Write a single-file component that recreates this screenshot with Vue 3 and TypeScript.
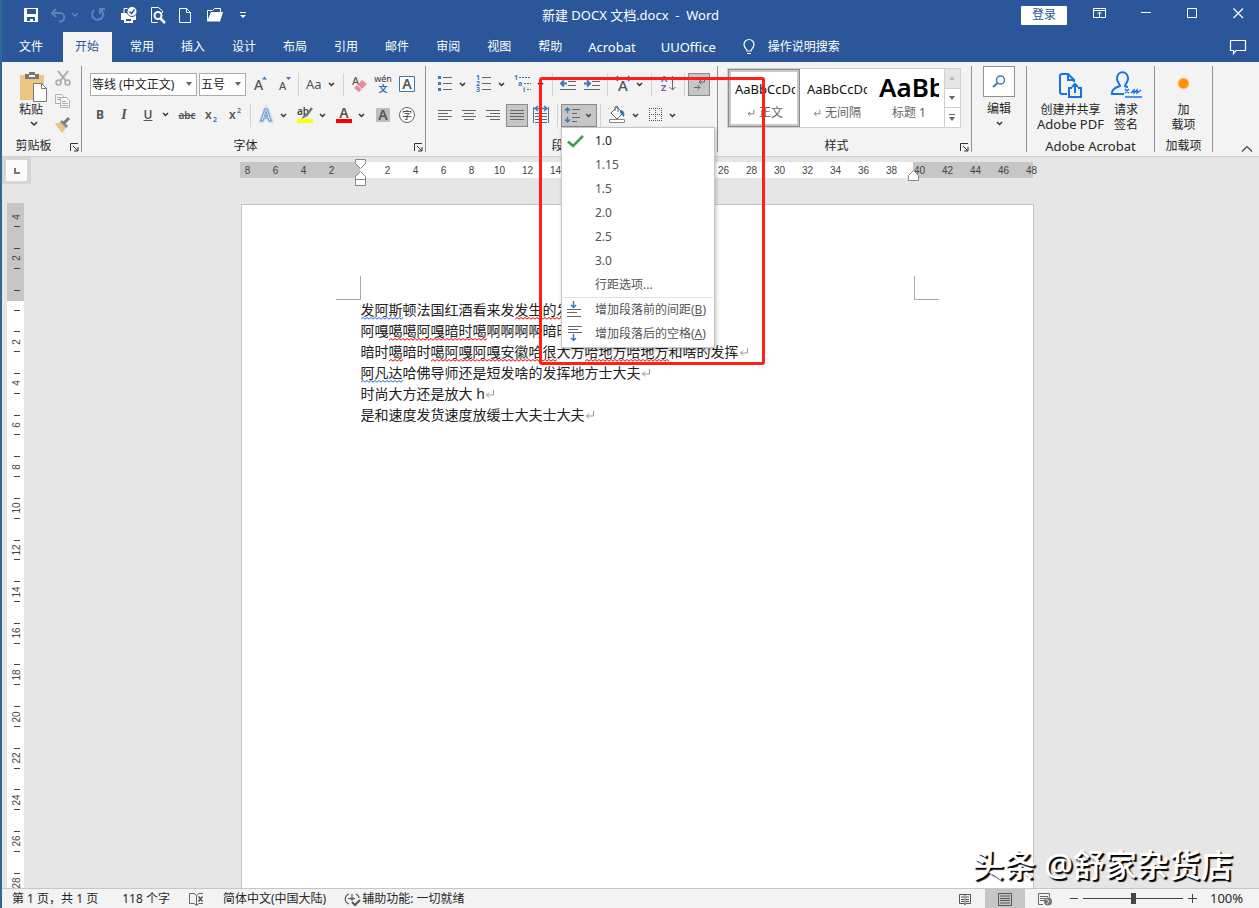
<script setup lang="ts">
import { ref } from 'vue'

interface Run {
  text: string
  mark?: 'grammar' | 'spelling'
}

const tabs: string[] = ['文件', '开始', '常用', '插入', '设计', '布局', '引用', '邮件', '审阅', '视图', '帮助', 'Acrobat', 'UUOffice']
const activeTab = ref('开始')

const spacings: string[] = ['1.0', '1.15', '1.5', '2.0', '2.5', '3.0']
const currentSpacing = ref('1.0')
const zoomLevel = ref(100)

const across: string[] = ['8', '6', '4', '2', '']
for (let n = 2; n <= 48; n += 2) across.push(String(n))
const down: string[] = ['4', '2', '']
for (let n = 2; n <= 28; n += 2) down.push(String(n))

const paragraphs: Run[][] = [
  [{ text: '发阿斯', mark: 'grammar' }, { text: '顿法国红酒看来发' }, { text: '发生的发', mark: 'spelling' }],
  [{ text: '阿嘎' }, { text: '噶噶阿嘎暗时噶', mark: 'spelling' }, { text: '啊啊啊啊暗时' }],
  [
    { text: '暗时' },
    { text: '噶', mark: 'spelling' },
    { text: '暗时' },
    { text: '噶阿嘎阿嘎安徽哈很', mark: 'spelling' },
    { text: '大方' },
    { text: '哈地方哈地方', mark: 'spelling' },
    { text: '和啥的发挥' },
  ],
  [{ text: '阿凡达', mark: 'grammar' }, { text: '哈佛导师还是短发啥的发挥地方士大夫' }],
  [{ text: '时尚大方还是放大 h' }],
  [{ text: '是和速度发货速度放缓士大夫士大夫' }],
]
</script>

<template>
  <div class="window">
    <svg class="defs" width="0" height="0" aria-hidden="true">
      <symbol id="chev" viewBox="0 0 12 23"><path d="M3 10l2.500 2.500L8 10" fill="none" stroke="#333" stroke-width="1.500" /></symbol>
      <symbol id="launch" viewBox="0 0 16 12"><path d="M5.500 11V3.500H13M8 6l4.500 4.500M13 7v4H9" fill="none" stroke="#333" /></symbol>
      <symbol id="ret" viewBox="0 0 10 10"><path d="M8.500 1v5h-7M4 3.500L1.500 6 4 8.500" fill="none" stroke="currentColor" /></symbol>
    </svg>

    <header class="titlebar">
      <div class="quick">
        <button aria-label="保存"><svg width="30" height="30"><path d="M9 8h14v14H9z" fill="#fff" /><path d="M12 9h9v5h-9zM12 17h8v4h-2v-2h-3v2h-3z" fill="#2b579a" /></svg></button>
        <button aria-label="撤消"><svg width="36" height="30"><path d="M11 9L7 13l4 4M7.500 13H15a4 4 0 0 1 0 8.500h-1" fill="none" stroke="#5f83ba" stroke-width="2" /><path d="M27 13l3 3 3-3" fill="none" stroke="#5f83ba" stroke-width="1.500" /></svg></button>
        <button aria-label="恢复"><svg width="32" height="30"><path d="M13 10a5.500 5.500 0 1 0 8 1l-2-1.500" fill="none" stroke="#5f83ba" stroke-width="2" /><path d="M24 9h-5v5" fill="none" stroke="#5f83ba" stroke-width="2" /></svg></button>
        <button aria-label="打印"><svg width="30" height="30"><path d="M8 13h15v7h-3v3H11v-3H8z" fill="#fff" /><path d="M11 13V8.500h6M12.500 18.500h6v3h-6z" fill="#2b579a" stroke="#fff" /><circle cx="19" cy="11.500" r="5" fill="#fff" stroke="#2b579a" /><path d="M16.500 11.500l2 2 3-4" fill="none" stroke="#2b579a" stroke-width="1.500" /></svg></button>
        <button aria-label="打印预览"><svg width="29" height="30"><path d="M19.500 13V11l-4-3.500H8.500v15h6" fill="none" stroke="#fff" /><circle cx="15" cy="15.500" r="3.500" fill="none" stroke="#fff" stroke-width="2" /><path d="M17 18l5 5" stroke="#fff" stroke-width="2.500" /></svg></button>
        <button aria-label="新建"><svg width="28" height="30"><path d="M7.500 8.500h7l4 4v10h-11zM14.500 8.500v4h4" fill="none" stroke="#fff" /></svg></button>
        <button aria-label="打开"><svg width="31" height="30"><path d="M7.500 21V10.500h5l2-2h6v4" fill="none" stroke="#fff" /><path d="M11 12h12l-3 9.500H7z" fill="#fff" /></svg></button>
        <button aria-label="自定义快速访问工具栏"><svg width="26" height="30"><path d="M9 12.500h6" stroke="#fff" /><path d="M9 15h6l-3 3z" fill="#fff" /></svg></button>
      </div>
      <h1>新建 DOCX 文档.docx&nbsp; -&nbsp; Word</h1>
      <div class="system">
        <button class="login">登录</button>
        <button aria-label="功能区显示选项"><svg width="46" height="30"><path d="M7.500 8.500h12v9h-12zM7.500 10.500h12M13.500 17v-5M11.500 14l2-2 2 2" fill="none" stroke="#fff" /></svg></button>
        <button aria-label="最小化"><svg width="46" height="30"><path d="M9 12.500h10" stroke="#fff" /></svg></button>
        <button aria-label="最大化"><svg width="46" height="30"><path d="M9.500 8.500h9v9h-9z" fill="none" stroke="#fff" /></svg></button>
        <button aria-label="关闭"><svg width="27" height="30"><path d="M9.500 8.500l9.500 9.500M19 8.500L9.500 18" stroke="#fff" stroke-width="1.200" /></svg></button>
      </div>
    </header>

    <nav class="tabs">
      <button v-for="tab in tabs" :key="tab" :class="{ active: tab === activeTab, file: tab === '文件', latin: /^[A-Z]/.test(tab) }" @click="activeTab = tab">{{ tab }}</button>
      <button class="tell">
        <svg width="14" height="18"><path d="M5 13c0-2-3-3-3-6.500a5 5 0 0 1 10 0C12 10 9 11 9 13zM5 15.500h4" fill="none" stroke="#fff" stroke-width="1.200" /></svg>
        操作说明搜索
      </button>
      <button class="comments" aria-label="批注"><svg width="18" height="18"><path d="M1.500 2.500h15v10H7l-2.500 3v-3h-3z" fill="none" stroke="#fff" stroke-width="1.200" /></svg></button>
    </nav>

    <section class="ribbon">
      <div class="group clipboard">
        <div class="body side">
          <button class="paste">
            <svg width="30" height="32"><path d="M1 5h24v25H1z" fill="#ecc580" /><path d="M6 4h4V2h6v2h4v5H6z" fill="#777" /><path d="M10 5h6v2h-6z" fill="#f3f3f3" /><path d="M14.500 13.500h8l5 5v13h-13z" fill="#fff" stroke="#777" /><path d="M22.500 13.500v5h5" fill="none" stroke="#777" /></svg>
            <span>粘贴</span>
            <svg width="12" height="11" viewBox="0 6 12 11"><path d="M3 10l3 3 3-3" fill="none" stroke="#333" stroke-width="1.500" /></svg>
          </button>
          <div class="stack">
            <button aria-label="剪切"><svg width="18" height="22"><path d="M4 1l8 10M14 1L6 11" stroke="#aaa" stroke-width="2" /><g fill="none" stroke="#aaa" stroke-width="1.500"><circle cx="4.500" cy="12.500" r="2.500" /><circle cx="13.500" cy="12.500" r="2.500" /></g></svg></button>
            <button aria-label="复制"><svg width="18" height="23"><g fill="#f6f3f6" stroke="#b5acb5"><path d="M1.500 2.500h6l2 2v7h-8z" /><path d="M6.500 5.500h6l3 3v7h-9z" /></g><path d="M8 9.500h4M8 11.500h6M8 13.500h6M3 5.500h3M3 7.500h3" stroke="#b5acb5" /></svg></button>
            <button aria-label="格式刷"><svg width="18" height="23"><path d="M1 9l5-2 6 6-4 5z" fill="#ecc580" /><path d="M6 7l2-2 6 6-2 2z" fill="#888" /><path d="M10 8l5-5" stroke="#777" stroke-width="3" /></svg></button>
          </div>
        </div>
        <div class="caption"><span>剪贴板</span><button aria-label="剪贴板选项"><svg width="16" height="12"><use href="#launch" /></svg></button></div>
      </div>

      <div class="group font">
        <div class="body">
          <div class="row">
            <label class="combo family"><select aria-label="字体"><option>等线 (中文正文)</option></select><svg width="7" height="5"><path d="M0 0h6L3 4z" fill="#666" /></svg></label>
            <label class="combo size"><select aria-label="字号"><option>五号</option></select><svg width="7" height="5"><path d="M0 0h6L3 4z" fill="#666" /></svg></label>
            <button aria-label="增大字号"><svg width="25" height="23"><text x="8" y="17" class="glyph medium" font-size="14">A</text><path d="M16 6.500l2.500-3 2.500 3z" fill="#3d78b4" /></svg></button>
            <button aria-label="减小字号"><svg width="24" height="23"><text x="8" y="17" class="glyph medium" font-size="11">A</text><path d="M15 4h5l-2.500 3z" fill="#3d78b4" /></svg></button>
            <i class="sep"></i>
            <button aria-label="更改大小写"><svg width="24" height="23"><text x="4" y="16" class="glyph thin" font-size="13">Aa</text></svg><svg width="12" height="23"><use href="#chev" /></svg></button>
            <i class="sep wide"></i>
            <button aria-label="清除格式"><svg width="24" height="23"><text x="5" y="12" class="glyph medium" font-size="11">A</text><path d="M7 15l8-8 5 4-8 8z" fill="#e88a97" /><path d="M10 12l5 4" stroke="#f3f3f3" /></svg></button>
            <button aria-label="拼音指南"><svg width="24" height="23"><text x="12" y="9" text-anchor="middle" font-size="9" fill="#333">wén</text><text x="12" y="19" text-anchor="middle" font-size="9" fill="#2c6cb0" font-weight="700">文</text></svg></button>
            <button aria-label="字符边框"><svg width="24" height="23"><path d="M4.500 3.500h15v15h-15z" fill="#fff" stroke="#3d78b4" /><text x="12" y="16" text-anchor="middle" class="glyph" font-size="14">A</text></svg></button>
          </div>
          <div class="row">
            <button class="fmt"><b>B</b></button>
            <button class="fmt"><i>I</i></button>
            <button class="fmt split"><u>U</u><svg width="12" height="23"><use href="#chev" /></svg></button>
            <button class="fmt"><s>abc</s></button>
            <button aria-label="下标"><svg width="24" height="23"><text x="6" y="15" class="glyph" font-size="12">x</text><text x="14" y="18" font-size="7" fill="#2c6cb0" font-weight="600">2</text></svg></button>
            <button aria-label="上标"><svg width="24" height="23"><text x="6" y="15" class="glyph" font-size="12">x</text><text x="14" y="9" font-size="7" fill="#2c6cb0" font-weight="600">2</text></svg></button>
            <i class="sep"></i>
            <button class="split" aria-label="文本效果"><svg width="24" height="23"><text x="12" y="17" text-anchor="middle" font-size="16" fill="#fff" stroke="#cfe2f3" stroke-width="4">A</text><text x="12" y="17" text-anchor="middle" font-size="16" font-weight="600" fill="#fff" stroke="#5b93cb">A</text></svg><svg width="12" height="23"><use href="#chev" /></svg></button>
            <button class="split" aria-label="突出显示"><svg width="24" height="23"><text x="4" y="11" font-size="10" fill="#444" font-weight="600">ab</text><path d="M19 4l-6 8" stroke="#777" stroke-width="2.500" /><path d="M13 10l-2 1-3 4 5-2z" fill="#777" /><path d="M4 15h16v4H4z" fill="#ff0" /></svg><svg width="12" height="23"><use href="#chev" /></svg></button>
            <button class="split" aria-label="字体颜色"><svg width="24" height="23"><text x="12" y="14" text-anchor="middle" class="glyph" font-size="14">A</text><path d="M4 15h16v4H4z" fill="#f00" /></svg><svg width="12" height="23"><use href="#chev" /></svg></button>
            <button aria-label="字符底纹"><svg width="24" height="23"><path d="M5 4h14v14H5z" fill="#bdbdbd" /><text x="12" y="16" text-anchor="middle" class="glyph" font-size="14">A</text></svg></button>
            <button aria-label="带圈字符"><svg width="24" height="23"><circle cx="12" cy="11" r="7.500" fill="#fff" stroke="#666" /><text x="12" y="15" text-anchor="middle" font-size="10" fill="#333">字</text></svg></button>
          </div>
        </div>
        <div class="caption"><span>字体</span><button aria-label="字体选项"><svg width="16" height="12"><use href="#launch" /></svg></button></div>
      </div>

      <div class="group para">
        <div class="body">
          <div class="row">
            <button class="split" aria-label="项目符号"><svg width="24" height="23"><path d="M5 3h3v3H5zM5 9h3v3H5zM5 15h3v3H5z" fill="#3d78b4" /><path d="M10 4.500h9M10 10.500h9M10 16.500h9" stroke="#666" /></svg><svg width="12" height="23"><use href="#chev" /></svg></button>
            <button class="split" aria-label="编号"><svg width="24" height="23"><g font-size="7" font-weight="700" fill="#3d78b4"><text x="4" y="7">1</text><text x="4" y="13">2</text><text x="4" y="19">3</text></g><path d="M10 4.500h9M10 10.500h9M10 16.500h9" stroke="#666" /></svg><svg width="12" height="23"><use href="#chev" /></svg></button>
            <button class="split" aria-label="多级列表"><svg width="24" height="23"><g font-size="7" font-weight="700" fill="#3d78b4"><text x="3" y="7">1</text><text x="7" y="13">a</text><text x="12" y="19">i</text></g><path d="M8 4.500h12M13 10.500h7M16 16.500h4" stroke="#666" stroke-dasharray="2 1" /></svg><svg width="12" height="23"><use href="#chev" /></svg></button>
            <i class="sep close"></i>
            <button aria-label="减少缩进量"><svg width="24" height="23"><path d="M4 4.500h16M12 8.500h8M12 12.500h8M4 16.500h16" stroke="#666" /><path d="M11 10.500H5M8 7.500l-3 3 3 3" fill="none" stroke="#3d78b4" stroke-width="2" /></svg></button>
            <button aria-label="增加缩进量"><svg width="24" height="23"><path d="M4 4.500h16M12 8.500h8M12 12.500h8M4 16.500h16" stroke="#666" /><path d="M4 10.500h6M7 7.500l3 3-3 3" fill="none" stroke="#3d78b4" stroke-width="2" /></svg></button>
            <i class="sep"></i>
            <button aria-label="中文版式"><svg width="23" height="23"><text x="12" y="18" text-anchor="middle" class="glyph medium" font-size="15">A</text><path d="M9 5.500H5M7 3L4.500 5.500 7 8M15 5.500h4M17 3l2.500 2.500L17 8" fill="none" stroke="#3d78b4" stroke-width="1.500" /></svg><svg width="12" height="23"><use href="#chev" /></svg></button>
            <i class="sep wide"></i>
            <button aria-label="排序"><svg width="26" height="23"><text x="6" y="9" font-size="9" font-weight="700" fill="#3d78b4">A</text><text x="6" y="18" font-size="9" font-weight="700" fill="#8a52a8">Z</text><path d="M17.500 3v14M14.500 14l3 3 3-3" fill="none" stroke="#666" /></svg></button>
            <i class="sep"></i>
            <button class="pressed" aria-label="显示编辑标记"><svg width="20" height="21"><path d="M15.500 4v4h-5M12.500 5.500L10 8l2.500 2.500M5 13.500h6M8.500 11l2.500 2.500L8.500 16" fill="none" stroke="#666" /></svg></button>
          </div>
          <div class="row">
            <button aria-label="左对齐"><svg width="24" height="23"><path d="M5 6.500h14M5 9.500h10M5 12.500h14M5 15.500h10" stroke="#666" /></svg></button>
            <button aria-label="居中"><svg width="24" height="23"><path d="M5 6.500h14M7 9.500h10M5 12.500h14M7 15.500h10" stroke="#666" /></svg></button>
            <button aria-label="右对齐"><svg width="24" height="23"><path d="M5 6.500h14M9 9.500h10M5 12.500h14M9 15.500h10" stroke="#666" /></svg></button>
            <button class="pressed inset" aria-label="两端对齐"><svg width="20" height="21"><path d="M3 5.500h14M3 8.500h14M3 11.500h14M3 14.500h14" stroke="#666" /></svg></button>
            <button aria-label="分散对齐"><svg width="25" height="23"><path d="M4.500 3v16M19.500 3v16" stroke="#3d78b4" /><path d="M6 4.500h12M9 2L6 4.500 9 7M15 2l3 2.500L15 7" fill="none" stroke="#3d78b4" stroke-width="1.500" /><path d="M6 9.500h12M6 12.500h12M6 15.500h12M6 18.500h12" stroke="#666" /></svg></button>
            <i class="sep"></i>
            <div class="dropdown">
              <button class="pressed" aria-label="行和段落间距" aria-expanded="true"><svg width="20" height="21"><path d="M5.500 3v5M5.500 12v5M3 5.500L5.500 3 8 5.500M3 14.500L5.500 17 8 14.500" fill="none" stroke="#3d78b4" stroke-width="1.500" /><path d="M10 4.500h8M10 8.500h5M10 12.500h8M10 16.500h5" stroke="#666" /></svg><svg width="14" height="21"><use href="#chev" /></svg></button>
              <div class="menu" role="menu">
                <button v-for="value in spacings" :key="value" role="menuitemradio" :aria-checked="value === currentSpacing" :class="{ current: value === currentSpacing }" @click="currentSpacing = value">
                  <span class="tick"><svg v-if="value === currentSpacing" width="17" height="14"><path d="M1 7.500l5 4.500L16 2" fill="none" stroke="#3b9d50" stroke-width="2.500" /></svg></span>{{ value }}
                </button>
                <button role="menuitem"><span class="tick"></span>行距选项...</button>
                <hr />
                <button role="menuitem"><span class="tick"><svg width="16" height="18"><path d="M6.500 0v6M4 4l2.500 2.500L9 4" fill="none" stroke="#3d78b4" stroke-width="1.500" /><path d="M0 8.500h14M0 11.500h10M0 15.500h14" stroke="#666" /></svg></span>增加段落前的间距(<u>B</u>)</button>
                <button role="menuitem"><span class="tick"><svg width="16" height="18"><path d="M1 1.500h14M1 4.500h10M1 7.500h14" stroke="#666" /><path d="M6.500 9v6M4 13l2.500 2.500L9 13" fill="none" stroke="#3d78b4" stroke-width="1.500" /></svg></span>增加段落后的空格(<u>A</u>)</button>
              </div>
            </div>
            <i class="sep"></i>
            <button class="split" aria-label="底纹"><svg width="26" height="23"><path d="M7 9l6-6 6 6-6 6z" fill="#fff" stroke="#666" /><path d="M11 7V3a2 2 0 0 1 3 0v5" fill="none" stroke="#666" /><path d="M16 6c4 0 5 3 4 7-2-1-2-3-4-4z" fill="#3d78b4" /><path d="M5.500 15.500h15v3h-15z" fill="#fff" stroke="#888" /></svg><svg width="12" height="23"><use href="#chev" /></svg></button>
            <button aria-label="边框"><svg width="22" height="23"><path d="M4.500 4v13M10.500 4v13M16.500 4v13M4 4.500h13M4 10.500h13M4 16.500h13" stroke="#555" stroke-dasharray="1 1" /></svg><svg width="12" height="23"><use href="#chev" /></svg></button>
          </div>
        </div>
        <div class="caption"><span>段落</span><button aria-label="段落选项"><svg width="16" height="12"><use href="#launch" /></svg></button></div>
      </div>

      <div class="group styles">
        <div class="gallery">
          <button class="chosen"><span class="sample">AaBbCcDc</span><span class="name"><svg width="8" height="8" viewBox="0 0 10 10"><use href="#ret" /></svg>正文</span></button>
          <button><span class="sample">AaBbCcDc</span><span class="name"><svg width="8" height="8" viewBox="0 0 10 10"><use href="#ret" /></svg>无间隔</span></button>
          <button><span class="sample big">AaBb</span><span class="name">标题 1</span></button>
          <div class="scroll">
            <button class="off" aria-label="上一行"><svg width="7" height="5"><path d="M0 4h6L3 0z" fill="#bbb" /></svg></button>
            <button aria-label="下一行"><svg width="7" height="5"><path d="M0 0h6L3 4z" fill="#666" /></svg></button>
            <button aria-label="其他样式"><svg width="7" height="8"><path d="M0 .500h6" stroke="#666" /><path d="M0 3h6L3 7z" fill="#666" /></svg></button>
          </div>
        </div>
        <div class="caption"><span>样式</span><button aria-label="样式选项"><svg width="16" height="12"><use href="#launch" /></svg></button></div>
      </div>

      <div class="group edit">
        <button class="tall">
          <span class="frame"><svg width="16" height="16"><circle cx="9.500" cy="6" r="4" fill="none" stroke="#3d78b4" stroke-width="1.500" /><path d="M6.500 9L2 13" stroke="#3d78b4" stroke-width="2" /></svg></span>
          <span>编辑</span>
          <svg width="12" height="13" viewBox="0 4 12 13"><path d="M4 10l2.500 2.500L9 10" fill="none" stroke="#333" stroke-width="1.500" /></svg>
        </button>
      </div>

      <div class="group acrobat">
        <div class="side">
          <button class="tall pdf">
            <svg width="24" height="34"><path d="M9 28H4a2 2 0 0 1-2-2V10a2 2 0 0 1 2-2h6l6 6v2M10 8v6h6" fill="none" stroke="#1473e6" stroke-width="2" /><path d="M14 22h-3v9h12v-9h-3M17 27V18M14 21l3-3 3 3" fill="none" stroke="#1473e6" stroke-width="2" /></svg>
            <span>创建并共享</span><span class="latin">Adobe PDF</span>
          </button>
          <button class="tall">
            <svg width="32" height="34"><path d="M14 28H2c-1-4 2-6 8-8 0-2-3-4-3-7 0-9 11-9 11 0 0 3-3 5-3 7 1 1 2 1 3 1" fill="none" stroke="#1473e6" stroke-width="2" /><path d="M15 23l4 4M19 23l-4 4M21 27l3-3v3l3-3v3l4-3M15 31h17" fill="none" stroke="#1473e6" stroke-width="1.500" /></svg>
            <span>请求</span><span>签名</span>
          </button>
        </div>
        <div class="caption"><span class="latin">Adobe Acrobat</span></div>
      </div>

      <div class="group addin">
        <button class="tall"><svg width="26" height="34"><circle cx="12.500" cy="17.500" r="6" fill="#ffd596" /><circle cx="12.500" cy="17.500" r="5" fill="#ff920a" /></svg><span>加</span><span>载项</span></button>
        <div class="caption"><span>加载项</span></div>
      </div>
      <button class="collapse" aria-label="折叠功能区"><svg width="12" height="8"><path d="M1 6.500L6 1.500l5 5" fill="none" stroke="#444" stroke-width="1.200" /></svg></button>
    </section>

    <main class="workspace">
      <div class="gutter">
        <button class="tabstop" aria-label="左对齐制表符"><svg width="8" height="8"><path d="M2 1v5h5" fill="none" stroke="#777" stroke-width="2" /></svg></button>
        <div class="vruler">
          <div class="vnumbers"><div v-for="(n, i) in down" :key="i"><span><em>{{ n }}</em></span></div></div>
        </div>
      </div>
      <div class="canvas">
        <div class="hruler">
          <div class="hnumbers"><span v-for="(n, i) in across" :key="i">{{ n }}</span></div>
          <svg class="indent left" width="12" height="30"><path d="M.500 1.500h10v4l-5 5-5-5zM.500 18.500l5-5 5 5v9H.500zM.500 21.500h10" fill="#fff" stroke="#888" /></svg>
          <svg class="indent right" width="12" height="12"><path d="M.500 11.500v-5l5-5 5 5v5z" fill="#fff" stroke="#888" /></svg>
        </div>
        <article class="page">
          <div class="corners"><i></i><i></i></div>
          <p v-for="(runs, i) in paragraphs" :key="i">
            <span v-for="(run, j) in runs" :key="j" :class="run.mark">{{ run.text }}</span><svg width="10" height="10"><use href="#ret" /></svg>
          </p>
        </article>
      </div>
    </main>

    <footer class="status">
      <span class="pages">第 1 页，共 1 页</span>
      <span>118 个字</span>
      <button aria-label="校对"><svg width="17" height="16"><path d="M8.500 14.500L6 12.500H1.500v-10H6l2.500 2 2.500-2h4M8.500 4.500v10l2.500-2h4" fill="none" stroke="#666" /><path d="M10.500 5.500l4 5M14.500 5.500l-4 5" stroke="#555" stroke-width="1.500" /></svg></button>
      <span>简体中文(中国大陆)</span>
      <span class="access"><svg width="17" height="16"><path d="M5 3C0 5 0 11 5 13M4 7.500h2M9 7.500h2M8 3v6M12 3c2 1 3 3 3 4M6 7l2 2 2-2" fill="none" stroke="#555" stroke-width="1.200" /><path d="M8 11l3 3 5-5" fill="none" stroke="#555" stroke-width="2" /></svg>辅助功能: 一切就绪</span>
      <div class="views">
        <button aria-label="阅读视图"><svg width="14" height="14"><path d="M7 2.500H1.500v9H6l1 1 1-1h4.500v-9zM7 2v11" fill="none" stroke="#555" /><path d="M3 5h3M3 7.500h3M3 9.500h3M8 5h3M8 7.500h3M8 9.500h3" stroke="#555" /></svg></button>
        <button class="on" aria-label="页面视图"><svg width="14" height="14"><path d="M.500 1.500h13v12H.500zM2 4h10M2 6.500h10M2 8.500h10M2 11h10" fill="none" stroke="#555" /></svg></button>
        <button aria-label="Web 版式视图"><svg width="16" height="14"><path d="M6 12.500H1.500v-11h11v4M3 4.500h8M3 6.500h5M3 8.500h4" fill="none" stroke="#666" /><circle cx="11" cy="9.500" r="4" fill="#777" /><path d="M9 7l3 2-2 3" fill="none" stroke="#ddd" /></svg></button>
        <button class="step" aria-label="缩小"><svg width="9" height="9"><path d="M0 4.500h8" stroke="#444" /></svg></button>
        <input v-model="zoomLevel" type="range" min="10" max="190" aria-label="显示比例" />
        <button class="step" aria-label="放大"><svg width="9" height="9"><path d="M0 4.500h9M4.500 0v9" stroke="#444" /></svg></button>
        <span class="percent">{{ zoomLevel }}%</span>
      </div>
    </footer>

    <div class="callout" aria-hidden="true"></div>
    <div class="watermark">头条 @舒家杂货店</div>
  </div>
</template>

<style>
body {
  margin: 0;
}
</style>

<style scoped>
.window {
  position: relative;
  box-sizing: border-box;
  display: flex;
  flex-direction: column;
  height: 100vh;
  overflow: hidden;
  border-left: 2px solid #2b6a94;
  background: #e6e6e6;
  color: #262626;
  font: 12px/16px 'Noto Sans', 'Noto Sans CJK SC', sans-serif;
}
.defs {
  position: absolute;
}
button {
  display: flex;
  align-items: center;
  flex: none;
  margin: 0;
  padding: 0;
  border: 0;
  background: none;
  color: inherit;
  font: inherit;
  white-space: nowrap;
}
svg {
  display: block;
  flex: none;
}
.latin {
  font-size: 13px;
}
.titlebar {
  display: grid;
  grid-template-columns: 1fr auto 1fr;
  align-items: center;
  height: 30px;
  background: #2b579a;
  color: #fff;
}
.quick {
  display: flex;
  padding-left: 13px;
}
.titlebar h1 {
  margin: 0;
  font-size: 13px;
  font-weight: 400;
}
.system {
  display: flex;
  justify-content: flex-end;
  align-items: center;
  padding-right: 8px;
}
.login {
  justify-content: center;
  width: 46px;
  height: 19px;
  margin-right: 19px;
  border-radius: 1px;
  background: #fff;
  color: #2b579a;
}
.tabs {
  display: flex;
  align-items: flex-end;
  gap: 2px;
  height: 32px;
  background: #2b579a;
  color: #fff;
}
.tabs button {
  height: 30px;
  padding: 0 13px 0 12px;
}
.tabs .file {
  padding: 0 18px 0 17px;
}
.tabs .active {
  margin-right: 4px;
  background: #f3f3f3;
  color: #2b579a;
}
.tabs .latin {
  padding: 0 12px 0 11px;
  line-height: 14px;
}
.tabs .tell {
  gap: 12px;
}
.tabs .comments {
  margin-left: auto;
  padding-right: 12px;
}
.ribbon {
  display: flex;
  height: 94px;
  border-bottom: 1px solid #cfcfcf;
  background: #f3f3f3;
}
.group {
  box-sizing: border-box;
  display: flex;
  flex: none;
  flex-direction: column;
  justify-content: space-between;
  height: 86px;
  margin-top: 4px;
  border-right: 1px solid #919191;
}
.body {
  display: flex;
  flex-direction: column;
  gap: 8px;
  padding: 7px 0 0 6px;
}
.row {
  display: flex;
  height: 23px;
}
.caption {
  display: flex;
  line-height: 12px;
}
.caption span {
  flex: 1;
  text-align: center;
}
.sep {
  width: 1px;
  margin: 0 3px;
  background: #d2d2d2;
}
.sep.wide {
  margin-left: 5px;
}
.sep.close {
  margin-left: 2px;
}
.split {
  margin-right: 3px;
}
.pressed {
  box-sizing: border-box;
  height: 23px;
  border: 1px solid #8a8a8a;
  background: #c6c6c6;
}
.inset {
  margin: 0 1px;
}
.glyph {
  fill: #555;
  font-weight: 600;
}
.medium {
  font-weight: 500;
}
.thin {
  font-weight: 400;
}
.clipboard {
  width: 80px;
}
.side {
  display: flex;
  flex-direction: row;
}
.clipboard .side {
  gap: 5px;
  padding: 4px 0 0 16px;
}
.paste {
  flex-direction: column;
  width: 31px;
}
.paste span {
  align-self: flex-start;
  margin-left: 1px;
}
.stack {
  display: flex;
  flex-direction: column;
}
.font {
  width: 344px;
}
.combo {
  box-sizing: border-box;
  display: flex;
  align-items: center;
  border: 1px solid #ababab;
  background: #fff;
}
.combo select {
  flex: 1;
  min-width: 0;
  padding: 0 0 0 1px;
  border: 0;
  appearance: none;
  background: none;
  color: #222;
  font: inherit;
}
.combo svg {
  margin-right: 3px;
}
.family {
  width: 107px;
  margin: 0 2px;
}
.size {
  width: 47px;
}
.fmt {
  height: 21px;
  color: #555;
  font-size: 12px;
  font-weight: 600;
}
.fmt > :first-child {
  width: 24px;
  text-align: center;
}
.fmt b {
  font-weight: 700;
}
.fmt i {
  font-family: 'Liberation Serif', serif;
  font-size: 14px;
}
.fmt s {
  font-size: 10px;
}
.para {
  width: 292px;
}
.para .body {
  padding-left: 7px;
}
.dropdown {
  position: relative;
}
.menu {
  position: absolute;
  z-index: 2;
  top: 23px;
  left: 0;
  box-sizing: border-box;
  width: 154px;
  padding: 1px 0;
  border: 1px solid #c6c6c6;
  background: #fff;
  box-shadow: 1px 2px 4px rgba(0, 0, 0, 0.25);
  color: #555;
}
.menu button {
  width: 100%;
  height: 24px;
}
.menu .current {
  color: #222;
}
.menu hr {
  margin: 0 1px;
  border: 0;
  border-top: 1px solid #e0e0e0;
}
.tick {
  width: 28px;
  padding-left: 5px;
}
.styles {
  width: 254px;
}
.gallery {
  box-sizing: border-box;
  display: flex;
  height: 60px;
  margin: 2px 10px 0 9px;
  border: 1px solid #d0d0d0;
  background: #fff;
}
.gallery > button {
  box-sizing: border-box;
  flex-direction: column;
  width: 72px;
  padding: 7px 5px 0 7px;
  color: #666;
}
.gallery .chosen {
  padding: 4px 2px 0 4px;
  border: 3px solid #c8c8c8;
  outline: 1px solid #8a8a8a;
  outline-offset: -1px;
}
.sample {
  width: 60px;
  height: 26px;
  overflow: hidden;
  color: #111;
  font-size: 13px;
  line-height: 26px;
  text-align: left;
}
.big {
  color: #000;
  font-size: 26px;
  font-weight: 600;
  line-height: 22px;
}
.name {
  display: flex;
  align-items: center;
  gap: 4px;
  line-height: 22px;
}
.scroll {
  display: flex;
  flex: 1;
  flex-direction: column;
  border-left: 1px solid #d0d0d0;
}
.scroll button {
  flex: 1;
  justify-content: center;
  border-top: 1px solid #d0d0d0;
}
.scroll .off {
  border-top: 0;
  background: #e6e6e6;
}
.tall {
  flex-direction: column;
  line-height: 15px;
}
.edit {
  width: 55px;
}
.frame {
  box-sizing: border-box;
  display: flex;
  align-items: center;
  justify-content: center;
  width: 32px;
  height: 31px;
  margin-bottom: 4px;
  border: 1px solid #919191;
  background: #fff;
}
.acrobat {
  width: 128px;
}
.acrobat .side {
  gap: 6px;
  padding-left: 10px;
}
.tall > svg:first-child {
  margin-bottom: 2px;
}
.addin {
  width: 58px;
}
.collapse {
  align-self: flex-end;
  margin: 0 6px 3px auto;
}
.workspace {
  display: flex;
  flex: 1;
  min-height: 0;
  overflow: hidden;
}
.gutter {
  display: flex;
  flex: none;
  flex-direction: column;
  width: 29px;
}
.tabstop {
  box-sizing: content-box;
  justify-content: center;
  width: 21px;
  height: 21px;
  border: 4px solid #d6d6d6;
  border-width: 3px 4px;
  background: #fbfbfb;
}
.vruler {
  flex: 1;
  box-sizing: border-box;
  width: 17px;
  min-height: 0;
  margin: 19px 0 0 5px;
  overflow: hidden;
  background: linear-gradient(#c6c6c6 98px, #fff 98px);
}
.vnumbers {
  display: flex;
  flex-direction: column;
  height: 708px;
  margin-top: -7px;
}
.vnumbers div {
  display: flex;
  flex: 1;
  align-items: center;
  justify-content: center;
  padding-left: 2px;
}
.vnumbers span {
  box-sizing: border-box;
  display: flex;
  align-items: center;
  justify-content: center;
  width: 6px;
  height: 50%;
  border: solid #444;
  border-width: 1px 0;
}
.vnumbers div:first-child span {
  border-top-color: transparent;
}
.vnumbers em {
  color: #444;
  font: 10px/10px 'Liberation Sans', sans-serif;
  transform: rotate(-90deg);
}
.canvas {
  display: flex;
  flex: 1;
  flex-direction: column;
  align-items: center;
  padding-right: 16px;
}
.hruler {
  position: relative;
  flex: none;
  width: 793px;
  height: 16px;
  margin: 5px 2px 26px 0;
  background: linear-gradient(90deg, #c6c6c6 120px, #fff 120px 673px, #c6c6c6 673px);
}
.hnumbers {
  display: flex;
  margin-left: -6px;
}
.hnumbers span {
  flex: none;
  width: 28px;
  color: #444;
  font: 10px/17px 'Liberation Sans', sans-serif;
  text-align: center;
}
.indent {
  position: absolute;
}
.indent.left {
  top: -4px;
  left: 115px;
}
.indent.right {
  top: 7px;
  left: 668px;
}
.page {
  flex: 1;
  box-sizing: border-box;
  width: 793px;
  padding: 71px 94px 0;
  border: 1px solid #c6c6c6;
  border-bottom: 0;
  background: #fff;
}
.corners {
  display: flex;
  justify-content: space-between;
  margin-bottom: -1px;
}
.corners i {
  box-sizing: border-box;
  width: 25px;
  height: 24px;
  border: solid #aaa;
  border-width: 0 1px 1px 0;
}
.corners i:last-child {
  border-width: 0 0 1px 1px;
}
.page p {
  display: flex;
  align-items: center;
  height: 21px;
  margin: 0 25px;
  color: #222;
  font-size: 14px;
  line-height: 21px;
  white-space: nowrap;
}
.page p svg {
  color: #999;
}
.grammar,
.spelling {
  background-position: 0 100%;
  background-repeat: repeat-x;
  background-size: 4px 3px;
}
.grammar {
  background-image: url("data:image/svg+xml,%3Csvg xmlns='http://www.w3.org/2000/svg' width='4' height='3'%3E%3Cpath d='M-1 3L2 .5 5 3' fill='none' stroke='%232a62e8'/%3E%3C/svg%3E");
}
.spelling {
  background-image: url("data:image/svg+xml,%3Csvg xmlns='http://www.w3.org/2000/svg' width='4' height='3'%3E%3Cpath d='M-1 3L2 .5 5 3' fill='none' stroke='%23f00000'/%3E%3C/svg%3E");
}
.status {
  display: flex;
  flex: none;
  align-items: center;
  gap: 18px;
  height: 19px;
  padding: 0 17px 0 10px;
  border-top: 1px solid #c6c6c6;
  background: #f3f3f3;
}
.status span {
  line-height: 19px;
  white-space: nowrap;
}
.pages {
  margin-right: 6px;
}
.access {
  display: flex;
  align-items: center;
  gap: 1px;
}
.views {
  display: flex;
  align-items: center;
  height: 19px;
  margin-left: auto;
}
.views button {
  justify-content: center;
  width: 40px;
  height: 19px;
}
.views .on {
  background: #c6c6c6;
}
.views .step {
  width: 18px;
}
.views input {
  width: 100px;
  height: 16px;
  margin: 0;
  appearance: none;
  background: linear-gradient(#444, #444) center / 100% 1px no-repeat;
}
.views input::-webkit-slider-thumb {
  width: 5px;
  height: 11px;
  appearance: none;
  background: #444;
}
.percent {
  width: 32px;
  margin-left: 9px;
  font-size: 13px;
}
.callout {
  position: absolute;
  z-index: 3;
  top: 77px;
  left: 537px;
  box-sizing: border-box;
  width: 226px;
  height: 288px;
  border: 3px solid #fe2015;
  border-radius: 3px;
  pointer-events: none;
}
.watermark {
  position: absolute;
  right: 26px;
  bottom: 21px;
  color: #fff;
  font-size: 32px;
  font-weight: 500;
  line-height: 44px;
  text-shadow: 2px 2px 1px #000;
}
</style>
